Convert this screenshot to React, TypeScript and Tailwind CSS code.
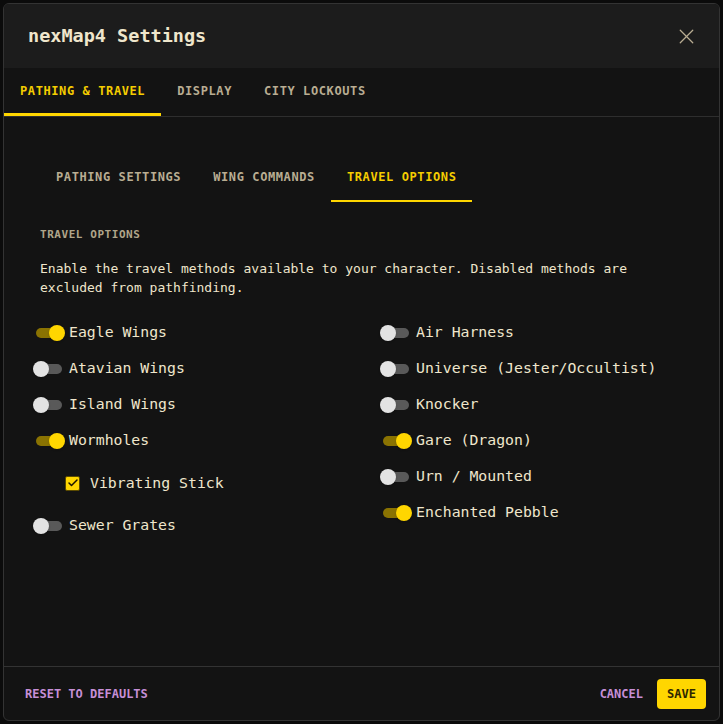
import { useState } from "react"
import { X, Check } from "lucide-react"

const mono = "font-['DejaVu_Sans_Mono',monospace]"

const mainTabs = ["Pathing & Travel", "Display", "City Lockouts"]
const subTabs = ["Pathing Settings", "Wing Commands", "Travel Options"]

type Option = { id: string; label: string; on: boolean }

const leftOptions: Option[] = [
  { id: "eagle", label: "Eagle Wings", on: true },
  { id: "atavian", label: "Atavian Wings", on: false },
  { id: "island", label: "Island Wings", on: false },
  { id: "wormholes", label: "Wormholes", on: true },
]

const rightOptions: Option[] = [
  { id: "harness", label: "Air Harness", on: false },
  { id: "universe", label: "Universe (Jester/Occultist)", on: false },
  { id: "knocker", label: "Knocker", on: false },
  { id: "gare", label: "Gare (Dragon)", on: true },
  { id: "urn", label: "Urn / Mounted", on: false },
  { id: "pebble", label: "Enchanted Pebble", on: true },
]

function Toggle({ on, onClick }: { on: boolean; onClick: () => void }) {
  return (
    <button onClick={onClick} className="relative w-[32px] h-4 shrink-0">
      <span
        className={`absolute left-[3px] right-[3px] top-[3px] h-[10px] rounded-full ${
          on ? "bg-[#8a7302]" : "bg-[#595959]"
        }`}
      />
      <span
        className={`absolute top-0 w-4 h-4 rounded-full shadow ${
          on ? "right-0 bg-[#ffd600]" : "left-0 bg-[#e3e3e3]"
        }`}
      />
    </button>
  )
}

function ToggleRow({ opt, onToggle }: { opt: Option; onToggle: () => void }) {
  return (
    <div className="flex items-center h-9 gap-1">
      <Toggle on={opt.on} onClick={onToggle} />
      <span className="text-[14.8px] text-[#efe6cc]">{opt.label}</span>
    </div>
  )
}

export default function App() {
  const [left, setLeft] = useState(leftOptions)
  const [right, setRight] = useState(rightOptions)
  const [stick, setStick] = useState(true)
  const [sewer, setSewer] = useState(false)

  const flip = (list: Option[], id: string) => list.map((o) => (o.id === id ? { ...o, on: !o.on } : o))

  return (
    <div className={`w-[723px] h-[724px] bg-[#0b0b0b] p-[3px] ${mono}`}>
      <div className="h-[718px] w-[717px] flex flex-col rounded-md border border-[#333] bg-[#131313] overflow-hidden">
        {/* Header */}
        <div className="h-[64px] shrink-0 bg-[#1c1c1c] flex items-center justify-between pl-6 pr-[20px]">
          <h1 className="text-[18.5px] font-bold text-[#efe6cc]">nexMap4 Settings</h1>
          <X className="w-[25px] h-[25px] text-[#b9ad92]" strokeWidth={1.2} />
        </div>

        {/* Main tabs */}
        <div className="flex h-[49px] shrink-0 border-b border-[#2e2e2e]">
          {mainTabs.map((t, i) => (
            <div
              key={t}
              className={`px-4 flex items-center uppercase text-[12px] font-bold tracking-[0.05em] border-b-[3px] ${
                i === 0 ? "text-[#f5cd00] border-[#ffd600]" : "text-[#b9ad92] border-transparent"
              }`}
            >
              {t}
            </div>
          ))}
        </div>

        {/* Body */}
        <div className="flex-1 pl-[36px] pr-8 pt-[37px]">
          <div className="flex h-12">
            {subTabs.map((t, i) => (
              <div
                key={t}
                className={`px-4 flex items-center uppercase text-[12px] font-bold tracking-[0.05em] border-b-2 ${
                  i === 2 ? "text-[#f5cd00] border-[#ffd600]" : "text-[#b9ad92] border-transparent"
                }`}
              >
                {t}
              </div>
            ))}
          </div>

          <div className="pt-[25px]">
            <div className="text-[11px] font-bold tracking-[0.05em] text-[#b0a58a] uppercase">Travel Options</div>
            <p className="mt-[15px] text-[13px] leading-[19px] text-[#efe6cc] pr-10">
              Enable the travel methods available to your character. Disabled methods are excluded from pathfinding.
            </p>

            <div className="grid grid-cols-[347px_1fr] mt-[18px] -ml-[7px]">
              <div>
                {left.map((o) => (
                  <ToggleRow key={o.id} opt={o} onToggle={() => setLeft(flip(left, o.id))} />
                ))}
                <label className="flex items-center h-[49px] pl-[32px] gap-[10px]">
                  <button
                    onClick={() => setStick(!stick)}
                    className="w-[15px] h-[15px] rounded-[2px] border border-[#5a4a00] bg-[#ffd600] flex items-center justify-center"
                  >
                    {stick && <Check className="w-3 h-3 text-[#1a1400]" strokeWidth={3} />}
                  </button>
                  <span className="text-[14.8px] text-[#efe6cc]">Vibrating Stick</span>
                </label>
                <ToggleRow
                  opt={{ id: "sewer", label: "Sewer Grates", on: sewer }}
                  onToggle={() => setSewer(!sewer)}
                />
              </div>
              <div>
                {right.map((o) => (
                  <ToggleRow key={o.id} opt={o} onToggle={() => setRight(flip(right, o.id))} />
                ))}
              </div>
            </div>
          </div>
        </div>

        {/* Footer */}
        <div className="h-[54px] shrink-0 border-t border-[#333] flex items-center justify-between pl-[21px] pr-[13px]">
          <button className="uppercase font-bold text-[12px] text-[#c68fd6]">Reset to Defaults</button>
          <div className="flex items-center gap-[14px]">
            <button className="uppercase font-bold text-[12px] text-[#c68fd6]">Cancel</button>
            <button className="uppercase font-bold text-[12px] text-[#2e2600] bg-[#ffd600] rounded-[4px] w-[49px] h-[30px]">
              Save
            </button>
          </div>
        </div>
      </div>
    </div>
  )
}
